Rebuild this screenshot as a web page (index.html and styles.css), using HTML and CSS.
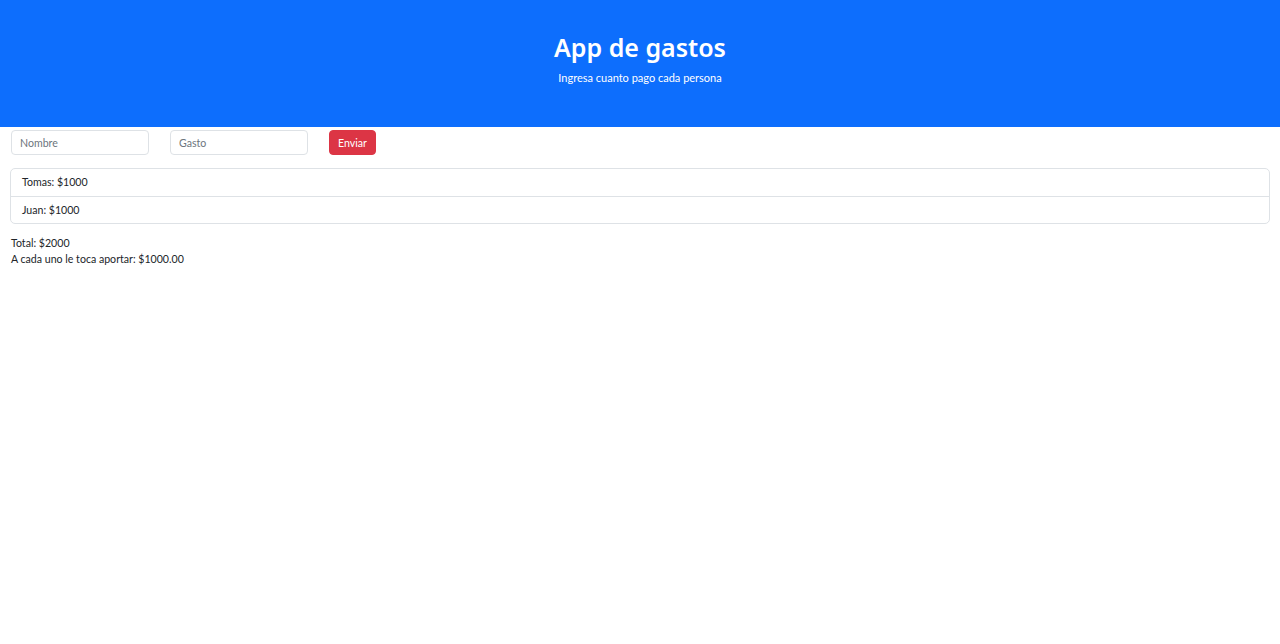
FILE: index.html
```html
<!DOCTYPE html>
<html lang="es">
<head>
<meta charset="utf-8">
<title>App de gastos</title>
<link rel="stylesheet" href="styles.css">
</head>
<body>
<header class="hero">
  <h1 class="hero-title">App de gastos</h1>
  <p class="hero-sub">Ingresa cuanto pago cada persona</p>
</header>
<main class="content">
  <form class="entry-form">
    <input class="field" type="text" placeholder="Nombre">
    <input class="field" type="text" placeholder="Gasto">
    <button class="btn-send" type="button">Enviar</button>
  </form>
  <ul class="list">
    <li class="list-item">Tomas: $1000</li>
    <li class="list-item">Juan: $1000</li>
  </ul>
  <div class="summary">
    <div>Total: $2000</div>
    <div>A cada uno le toca aportar: $1000.00</div>
  </div>
</main>
</body>
</html>
```
FILE: styles.css
```css
* { box-sizing: border-box; }
html, body { margin: 0; padding: 0; }
body {
  font-family: "Lato", "Noto Sans", sans-serif;
  font-size: 10.6px;
  color: #212529;
  background: #fff;
}
.hero {
  background: #0d6efd;
  color: #fff;
  height: 127px;
  display: flex;
  flex-direction: column;
  align-items: center;
  padding-top: 30px;
}
.hero-title {
  margin: 0;
  font-family: "Noto Sans", sans-serif;
  font-size: 25px;
  font-weight: 600;
  line-height: 34px;
}
.hero-sub {
  margin: 7px 0 0;
  font-size: 11px;
  line-height: 14px;
}
.content { padding: 3px 10px 0 10px; }
.entry-form {
  display: flex;
  gap: 21px;
  align-items: center;
  padding-left: 1px;
}
.field {
  width: 138px;
  height: 25px;
  border: 1px solid #dee2e6;
  border-radius: 4px;
  padding: 0 8px;
  font-family: inherit;
  font-size: 10.6px;
  color: #212529;
  outline: none;
}
.field::placeholder { color: #6c757d; }
.btn-send {
  height: 25px;
  padding: 0 8px;
  background: #dc3545;
  color: #fff;
  border: 1px solid #dc3545;
  border-radius: 4px;
  font-family: inherit;
  font-size: 10.6px;
}
.list {
  list-style: none;
  margin: 13px 0 0;
  padding: 0;
  border: 1px solid #dee2e6;
  border-radius: 5px;
}
.list-item {
  height: 27px;
  line-height: 27px;
  padding: 0 11px;
}
.list-item + .list-item { border-top: 1px solid #dee2e6; }
.summary {
  margin-top: 11px;
  padding-left: 1px;
  line-height: 16px;
}
```
